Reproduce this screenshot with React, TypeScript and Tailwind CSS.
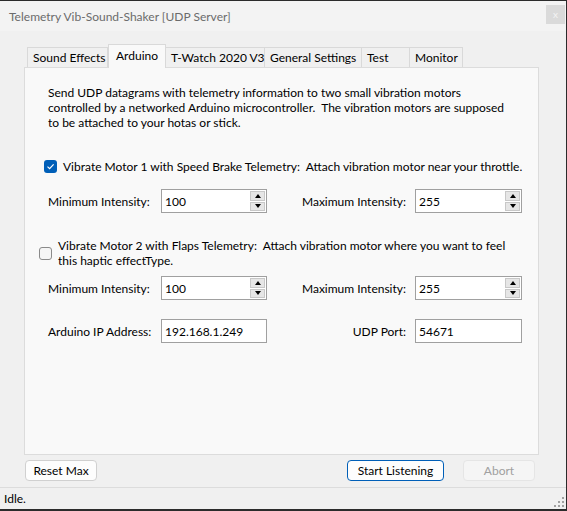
import React from "react";

const tabs = [
  { label: "Sound Effects", w: "w-[81px]" },
  { label: "Arduino", w: "w-[58px]", active: true },
  { label: "T-Watch 2020 V3", w: "w-[99px]" },
  { label: "General Settings", w: "w-[97px]" },
  { label: "Test", w: "w-[48px]" },
  { label: "Monitor", w: "w-[53px]" },
];

function Spinner() {
  return (
    <div className="absolute right-px top-px bottom-px flex w-[15px] flex-col gap-px">
      <div className="flex flex-1 items-center justify-center border border-[#c8c8c8] bg-[#e6e6e6]">
        <div className="h-0 w-0 border-x-[3.5px] border-b-[4px] border-x-transparent border-b-black" />
      </div>
      <div className="flex flex-1 items-center justify-center border border-[#c8c8c8] bg-[#e6e6e6]">
        <div className="h-0 w-0 border-x-[3.5px] border-t-[4px] border-x-transparent border-t-black" />
      </div>
    </div>
  );
}

function Field({ value, spin }: { value: string; spin?: boolean }) {
  return (
    <div className="relative flex h-[24px] items-center border border-[#a0a0a0] bg-white pl-[3px] text-black">
      {value}
      {spin && <Spinner />}
    </div>
  );
}

function Row({
  left,
  leftValue,
  right,
  rightValue,
  spin,
}: {
  left: string;
  leftValue: string;
  right: string;
  rightValue: string;
  spin?: boolean;
}) {
  return (
    <div className="grid grid-cols-[113px_106px_148px_107px] items-center pl-[23px]">
      <span>{left}</span>
      <Field value={leftValue} spin={spin} />
      <span className="pr-[9px] text-right">{right}</span>
      <Field value={rightValue} spin={spin} />
    </div>
  );
}

export default function App() {
  return (
    <div className="flex h-[511px] w-[567px] flex-col overflow-hidden border-t border-r border-b-2 border-[#2b2b2b] bg-[#f0f0f0] font-['Segoe_UI','Lato',sans-serif] text-[12px] leading-[15px] text-black">
      <div className="flex h-[30px] items-center justify-between bg-[#f3f3f3] pl-[9px]">
        <span className="text-[#6b6b6b]">Telemetry Vib-Sound-Shaker [UDP Server]</span>
        <div className="mr-px mt-[-4px] flex h-[19px] w-[19px] items-center justify-center bg-[#dadada] text-[10px] text-[#f4f4f4]">
          x
        </div>
      </div>

      <div className="flex flex-1 flex-col pt-[13px]">
        <div className="flex h-[23px] items-end pl-[27px]">
          {tabs.map((t) =>
            t.active ? (
              <div
                key={t.label}
                className={`relative z-10 -mb-px flex h-[24px] ${t.w} items-start justify-center whitespace-nowrap border-x border-t border-[#d9d9d9] bg-[#f9f9f9] pt-[3px]`}
              >
                {t.label}
              </div>
            ) : (
              <div
                key={t.label}
                className={`flex h-[20px] ${t.w} items-center whitespace-nowrap border-t border-r border-[#d9d9d9] bg-[#f0f0f0] pl-[5px] first:border-l`}
              >
                {t.label}
              </div>
            ),
          )}
        </div>

        <div className="ml-[24px] flex h-[388px] w-[515px] flex-col border border-[#dcdcdc] bg-[#f9f9f9]">
          <p className="mt-[17px] whitespace-nowrap pl-[23px]">
            Send UDP datagrams with telemetry information to two small vibration motors
            <br />
            controlled by a networked Arduino microcontroller.&nbsp; The vibration motors are supposed
            <br />
            to be attached to your hotas or stick.
          </p>

          <label className="mt-[29px] flex items-center gap-[6px] pl-[19px]">
            <span className="flex h-[13px] w-[13px] items-center justify-center rounded-[3px] bg-[#005fb8]">
              <svg width="9" height="9" viewBox="0 0 9 9">
                <path d="M1.5 4.6 L3.6 6.6 L7.6 2.4" fill="none" stroke="white" strokeWidth="1.2" />
              </svg>
            </span>
            <span>Vibrate Motor 1 with Speed Brake Telemetry:&nbsp; Attach vibration motor near your throttle.</span>
          </label>

          <div className="mt-[15px]">
            <Row left="Minimum Intensity:" leftValue="100" right="Maximum Intensity:" rightValue="255" spin />
          </div>

          <label className="mt-[25px] flex items-center gap-[6px] pl-[14px]">
            <span className="h-[13px] w-[13px] shrink-0 rounded-[3px] border border-[#8a8a8a] bg-[#f5f5f5]" />
            <span className="whitespace-nowrap">
              Vibrate Motor 2 with Flaps Telemetry:&nbsp; Attach vibration motor where you want to feel
              <br />
              this haptic effectType.
            </span>
          </label>

          <div className="mt-[8px]">
            <Row left="Minimum Intensity:" leftValue="100" right="Maximum Intensity:" rightValue="255" spin />
          </div>

          <div className="mt-[19px]">
            <Row left="Arduino IP Address:" leftValue="192.168.1.249" right="UDP Port:" rightValue="54671" />
          </div>
        </div>

        <div className="mt-[5px] flex items-center pl-[25px] pr-[31px]">
          <button className="h-[21px] w-[72px] rounded-[4px] border border-[#d0d0d0] bg-[#fdfdfd]">Reset Max</button>
          <button className="ml-auto h-[21px] w-[97px] rounded-[4px] border border-[#005fb8] bg-[#fdfdfd]">
            Start Listening
          </button>
          <button className="ml-[19px] h-[21px] w-[72px] rounded-[4px] border border-[#e5e5e5] bg-[#f5f5f5] text-[#a0a0a0]">
            Abort
          </button>
        </div>
      </div>

      <div className="relative flex h-[22px] items-center border-t border-[#dcdcdc] pl-[4px]">
        Idle.
        <svg className="absolute bottom-[2px] right-[2px]" width="10" height="10" viewBox="0 0 10 10">
          <g fill="#a0a0a0">
            <rect x="8" y="0" width="2" height="2" />
            <rect x="4" y="4" width="2" height="2" />
            <rect x="8" y="4" width="2" height="2" />
            <rect x="0" y="8" width="2" height="2" />
            <rect x="4" y="8" width="2" height="2" />
            <rect x="8" y="8" width="2" height="2" />
          </g>
        </svg>
      </div>
    </div>
  );
}
